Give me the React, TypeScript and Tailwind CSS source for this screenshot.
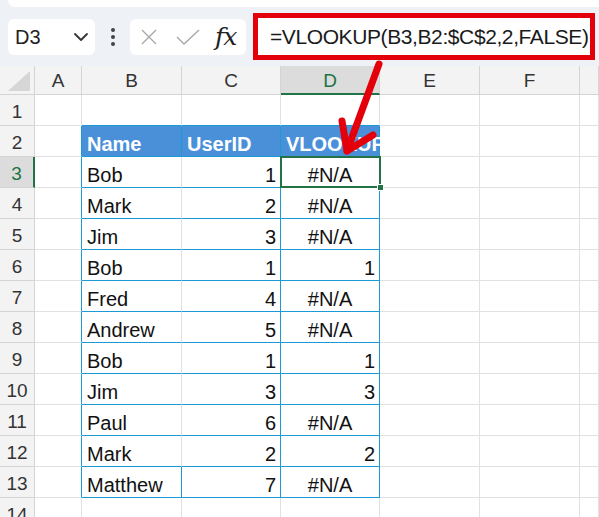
import React from 'react';

type Row = { name: string; id: number; v: string };

const rows: Row[] = [
  { name: 'Bob', id: 1, v: '#N/A' },
  { name: 'Mark', id: 2, v: '#N/A' },
  { name: 'Jim', id: 3, v: '#N/A' },
  { name: 'Bob', id: 1, v: '1' },
  { name: 'Fred', id: 4, v: '#N/A' },
  { name: 'Andrew', id: 5, v: '#N/A' },
  { name: 'Bob', id: 1, v: '1' },
  { name: 'Jim', id: 3, v: '3' },
  { name: 'Paul', id: 6, v: '#N/A' },
  { name: 'Mark', id: 2, v: '2' },
  { name: 'Matthew', id: 7, v: '#N/A' },
];

const letters = ['A', 'B', 'C', 'D', 'E', 'F', 'G'];

function FormulaBar() {
  return (
    <div className="flex h-[47px] items-center pl-[8px]">
      {/* name box */}
      <div className="flex h-[36px] w-[87px] items-center justify-between rounded-[6px] bg-white pl-[7px] pr-[4px] text-[20px] text-[#222]">
        <span>D3</span>
        <svg width="16" height="10" viewBox="0 0 16 10" className="mr-[2px]">
          <path d="M2 2 L8 8 L14 2" fill="none" stroke="#333" strokeWidth="1.8" strokeLinecap="round" strokeLinejoin="round" />
        </svg>
      </div>
      <div className="flex w-[35px] flex-col items-center gap-[3px]">
        <span className="h-[4px] w-[4px] rounded-full bg-[#444]" />
        <span className="h-[4px] w-[4px] rounded-full bg-[#444]" />
        <span className="h-[4px] w-[4px] rounded-full bg-[#444]" />
      </div>
      {/* cancel / enter / fx */}
      <div className="flex h-[36px] w-[116px] items-center rounded-[6px] bg-white pl-[10px]">
        <svg width="18" height="18" viewBox="0 0 18 18">
          <path d="M2 2 L16 16 M16 2 L2 16" stroke="#a6a6a6" strokeWidth="1.3" />
        </svg>
        <svg width="26" height="18" viewBox="0 0 26 18" className="ml-[17px]">
          <path d="M2 9 L9 16 L24 2" fill="none" stroke="#a6a6a6" strokeWidth="1.3" />
        </svg>
        <span className="ml-[14px] font-['DejaVu_Serif',serif] text-[25px] italic leading-none tracking-[-1px] text-[#222]">fx</span>
      </div>
      {/* formula input */}
      <div className="ml-[7px] flex h-[47px] w-[342px] items-center border-[5px] border-[#e3000b] bg-white pl-[12px] pt-[1px] text-[21px] tracking-[-0.4px] text-[#1a1a1a]">
        =VLOOKUP(B3,B2:$C$2,2,FALSE)
      </div>
    </div>
  );
}

function cellClass(r: number, c: number): string {
  // r: 1..14, c: 1..7 (A..G)
  const inTable = r >= 2 && r <= 13 && c >= 2 && c <= 4;
  let right = 'border-r-[#e1e1e1]';
  let bottom = 'border-b-[#e1e1e1]';
  if (r >= 2 && r <= 13) {
    if (c === 1 || c === 3 || c === 4) right = 'border-r-[#1b9ad6]';
    if (c === 2 && (r === 2 || r === 13)) right = 'border-r-[#1b9ad6]';
  }
  if (r >= 1 && r <= 13 && c >= 2 && c <= 4) bottom = 'border-b-[#1b9ad6]';
  const bg = r === 2 && inTable ? 'bg-[#4a90d9] text-white font-bold' : 'bg-white text-[#111]';
  return `flex items-center whitespace-nowrap border-r border-b ${right} ${bottom} ${bg}`;
}

export default function App() {
  return (
    <div className="relative h-[517px] w-[599px] overflow-hidden bg-[#eef1f5] font-['Liberation_Sans',Arial,sans-serif]">
      <div className="ml-[8px] h-[7px] rounded-bl-[8px] bg-white" />
      <div className="mt-[6px]">
        <FormulaBar />
      </div>

      <div className="relative mt-[6px] grid grid-cols-[35px_47px_100px_99px_99px_100px_100px_19px] grid-rows-[29px_repeat(14,31px)]">
        {/* corner */}
        <div className="relative border-r border-b border-[#d4d4d4] bg-[#f3f3f3]">
          <svg className="absolute right-[4px] bottom-[3px]" width="22" height="20" viewBox="0 0 22 20">
            <path d="M22 0 L22 20 L0 20 Z" fill="#d6d6d6" />
          </svg>
        </div>
        {letters.map((l) =>
          l === 'D' ? (
            <div key={l} className="flex items-center justify-center border-r border-b-2 border-r-[#d4d4d4] border-b-[#217346] bg-[#dcdcdc] pt-[4px] text-[19px] text-[#217346]">
              {l}
            </div>
          ) : (
            <div key={l} className="flex items-center justify-center overflow-hidden border-r border-b border-[#d4d4d4] bg-[#f3f3f3] pt-[3px] text-[19px] text-[#333]">
              {l === 'G' ? '' : l}
            </div>
          ),
        )}

        {Array.from({ length: 14 }, (_, i) => i + 1).map((r) => {
          const data = r >= 3 && r <= 13 ? rows[r - 3] : null;
          return (
            <React.Fragment key={r}>
              {r === 3 ? (
                <div className="flex items-center justify-center border-b border-r-2 border-b-[#d4d4d4] border-r-[#217346] bg-[#dcdcdc] pt-[4px] text-[19px] text-[#217346]">
                  {r}
                </div>
              ) : (
                <div className="flex items-center justify-center border-r border-b border-[#d4d4d4] bg-[#f3f3f3] pt-[4px] text-[19px] text-[#333]">
                  {r}
                </div>
              )}
              {letters.map((_, ci) => {
                const c = ci + 1;
                const cls = cellClass(r, c);
                let content: React.ReactNode = null;
                let align = 'justify-start pl-[5px]';
                if (r === 2 && c === 2) content = 'Name';
                if (r === 2 && c === 3) content = 'UserID';
                if (r === 2 && c === 4) content = 'VLOOKUP';
                if (data && c === 2) content = data.name;
                if (data && c === 3) {
                  content = data.id;
                  align = 'justify-end pr-[4px]';
                }
                if (data && c === 4) {
                  content = data.v;
                  align = data.v === '#N/A' ? 'justify-center' : 'justify-end pr-[4px]';
                }
                return (
                  <div key={c} className={`${cls} ${align} pt-[5px] text-[20px]`}>
                    {content}
                  </div>
                );
              })}
            </React.Fragment>
          );
        })}

        {/* selection around D3 */}
        <div className="pointer-events-none absolute top-[90px] left-[280px] h-[32px] w-[101px] border-2 border-[#217346]" />
        <div className="pointer-events-none absolute top-[118px] left-[377px] h-[7px] w-[7px] border border-white bg-[#217346]" />
      </div>

      {/* red arrow annotation */}
      <svg className="pointer-events-none absolute top-0 left-0" width="599" height="517" viewBox="0 0 599 517">
        <g stroke="#e3000b" strokeWidth="7" strokeLinecap="round" strokeLinejoin="round" fill="none">
          <path d="M379 64 L347 151" />
          <path d="M342 121 L347 151 L373 135" />
        </g>
      </svg>
    </div>
  );
}
